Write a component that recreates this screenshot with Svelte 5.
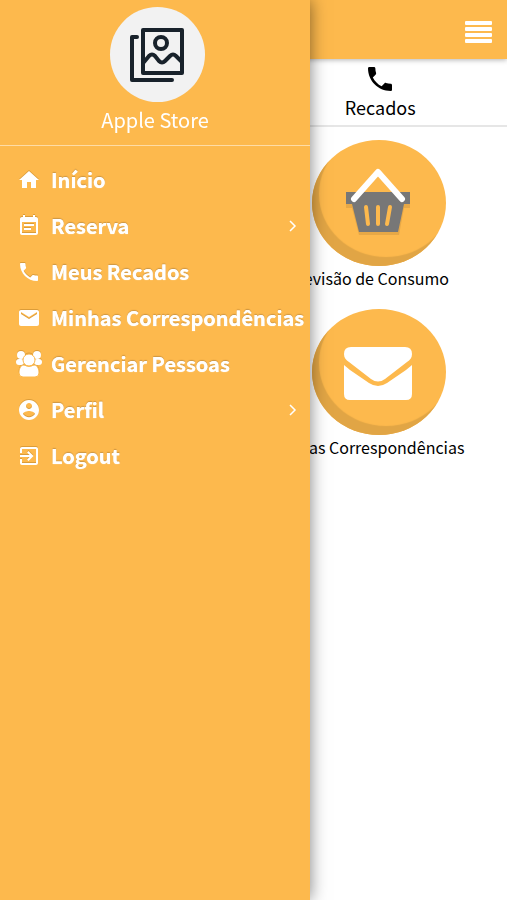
<script lang="ts">
  let open = true;

  const menu = [
    { label: "Início", icon: "home", sub: false },
    { label: "Reserva", icon: "event", sub: true },
    { label: "Meus Recados", icon: "phone", sub: false },
    { label: "Minhas Correspondências", icon: "mail", sub: false },
    { label: "Gerenciar Pessoas", icon: "group", sub: false },
    { label: "Perfil", icon: "account", sub: true },
    { label: "Logout", icon: "exit", sub: false },
  ];

  const paths: Record<string, string> = {
    home: "M10 20v-6h4v6h5v-8h3L12 3 2 12h3v8z",
    event: "M17 10H7v2h10v-2zm2-7h-1V1h-2v2H8V1H6v2H5c-1.110 0-2 .9-2 2v14c0 1.100.89 2 2 2h14c1.100 0 2-.9 2-2V5c0-1.100-.9-2-2-2zm0 16H5V8h14v11zm-5-5H7v2h7v-2z",
    phone: "M6.620 10.790c1.440 2.830 3.760 5.140 6.590 6.590l2.200-2.200c.27-.27.67-.36 1.020-.24 1.120.37 2.330.57 3.570.57.55 0 1 .45 1 1V20c0 .55-.45 1-1 1-9.390 0-17-7.610-17-17 0-.55.45-1 1-1h3.500c.55 0 1 .45 1 1 0 1.250.2 2.450.57 3.570.11.35.03.74-.25 1.020l-2.200 2.200z",
    mail: "M20 4H4c-1.100 0-2 .9-2 2v12c0 1.100.9 2 2 2h16c1.100 0 2-.9 2-2V6c0-1.100-.9-2-2-2zm0 4l-8 5-8-5V6l8 5 8-5v2z",
    account: "M12 2C6.480 2 2 6.480 2 12s4.480 10 10 10 10-4.480 10-10S17.520 2 12 2zm0 3c1.660 0 3 1.340 3 3s-1.340 3-3 3-3-1.340-3-3 1.340-3 3-3zm0 14.200c-2.500 0-4.710-1.280-6-3.220.03-1.990 4-3.080 6-3.080 1.990 0 5.970 1.090 6 3.080-1.290 1.940-3.500 3.220-6 3.220z",
    exit: "M10.090 15.590L11.500 17l5-5-5-5-1.410 1.410L12.670 11H3v2h9.670l-2.580 2.590zM19 3H5c-1.110 0-2 .9-2 2v4h2V5h14v14H5v-4H3v4c0 1.100.89 2 2 2h14c1.100 0 2-.9 2-2V5c0-1.100-.9-2-2-2z",
  };
</script>

<div class="page">
  <header>
    <button class="toggle" aria-label="Menu" on:click={() => (open = !open)}>
      <svg width="28" height="22" viewBox="0 0 28 22" fill="#fff">
        <rect x="0" y="0" width="27" height="4" rx="1" />
        <rect x="0" y="6" width="27" height="4" rx="1" />
        <rect x="0" y="12" width="27" height="4" rx="1" />
        <rect x="0" y="18" width="27" height="4" rx="1" />
      </svg>
    </button>
  </header>

  <nav class="tabs">
    <a class="tab" href="#recados">
      <svg width="32" height="32" viewBox="0 0 24 24"><path d={paths.phone} /></svg>
      <span>Recados</span>
    </a>
  </nav>

  <main>
    <a class="tile" href="#consumo">
      <span class="disc">
        <svg width="70" height="70" viewBox="0 0 70 70">
          <path fill="#d99d42" d="M2 28h64v12h-6l-5 27H15L8 40H2z" opacity=".6" />
          <path fill="#777" d="M2 24h64v12h-6l-6 28H15L8 36H2z" />
          <path stroke="#fdb94d" stroke-width="4" stroke-linecap="round" fill="none" d="M22 39l2 17M34 39v17M46 39l-3 17" />
          <path stroke="#fff" stroke-width="6" stroke-linecap="round" stroke-linejoin="round" fill="none" d="M10 31L34 4l24 27" />
        </svg>
      </span>
      <span class="caption">Previsão de Consumo</span>
    </a>
    <a class="tile" href="#correspondencias">
      <span class="disc">
        <svg width="70" height="70" viewBox="0 0 70 70" fill="#fff">
          <path d="M7 10h54q7 0 7 7c0 4-2 6-5 8L41 42q-7 5-14 0L5 25c-3-2-5-4-5-8q0-7 7-7z" />
          <path d="M0 28c2 2 4 3 6 5l19 13q9 6 18 0l19-13c2-2 4-3 6-5v29q0 6-6 6H6q-6 0-6-6z" />
        </svg>
      </span>
      <span class="caption">Minhas Correspondências</span>
    </a>
  </main>
</div>

{#if open}
  <aside>
    <div class="profile">
      <div class="avatar">
        <svg width="54" height="54" viewBox="0 0 54 54" fill="none" stroke="#18222b" stroke-width="4" stroke-linejoin="round" stroke-linecap="round">
          <path d="M13 2h39v43H13zM7 9H2v43h40" />
          <circle cx="31" cy="15" r="6" />
          <path d="M14 34l5-6q3-3 6 0l4 5q3 3 6 0l5-5q3-3 6 0l6 6" />
        </svg>
      </div>
      <div class="name">Apple Store</div>
    </div>

    <ul>
      {#each menu as item}
        <li>
          <a href="#{item.icon}">
            <span class="icon">
              {#if item.icon == "group"}
                <svg width="28" height="28" viewBox="0 0 28 28" fill="#fff">
                  <circle cx="6" cy="5" r="4" />
                  <circle cx="22" cy="5" r="4" />
                  <rect x="1" y="9" width="8" height="6" rx="3" />
                  <rect x="19" y="9" width="8" height="6" rx="3" />
                  <circle cx="14" cy="10" r="6" stroke="#fdb94d" />
                  <path d="M9 15q5 3 10 0c4 0 5 5 5 8q0 4-4 4H8q-4 0-4-4c0-3 1-8 5-8z" stroke="#fdb94d" />
                </svg>
              {:else}
                <svg width="24" height="24" viewBox="0 0 24 24" fill="#fff"><path d={paths[item.icon]} /></svg>
              {/if}
            </span>
            <span class="label">{item.label}</span>
            {#if item.sub}
              <svg class="chevron" width="8" height="12" viewBox="0 0 8 12" fill="none" stroke="#fff" stroke-width="1.500"><path d="M1 1l5 5-5 5" /></svg>
            {/if}
          </a>
        </li>
      {/each}
    </ul>
  </aside>
{/if}

<style>
  :global(body) {
    margin: 0;
    background: #fff;
    font-family: "Noto Sans CJK SC", "Open Sans", sans-serif;
  }

  a {
    color: inherit;
    text-decoration: none;
  }

  svg {
    display: block;
  }

  .page {
    overflow: hidden;
  }

  header {
    display: flex;
    justify-content: flex-end;
    align-items: center;
    height: 59px;
    padding: 4px 14px 0 0;
    box-sizing: border-box;
    background: #fdb94d;
    box-shadow: 0 1px 5px rgba(0, 0, 0, 0.3);
  }

  .toggle {
    padding: 0;
    border: 0;
    background: none;
    cursor: pointer;
  }

  .tabs {
    display: grid;
    grid-template-columns: 1fr 1fr;
    border-bottom: 2px solid #e6e6e6;
  }

  .tab {
    grid-column: 2;
    display: flex;
    flex-direction: column;
    align-items: center;
    padding: 4px 0 6px;
    color: #000;
    font-size: 18px;
    line-height: 24px;
  }

  main {
    display: grid;
    grid-template-columns: 1fr 1fr;
    row-gap: 19px;
    padding-top: 13px;
  }

  .tile {
    grid-column: 2;
    display: flex;
    flex-direction: column;
    align-items: center;
    padding-right: 24px;
    color: #000;
  }

  .disc {
    display: flex;
    justify-content: center;
    align-items: center;
    width: 134px;
    height: 126px;
    margin-left: 22px;
    border-radius: 50%;
    background: #fdb94d;
    box-shadow: inset 7px -9px 1px #e1a545;
  }

  .caption {
    font-size: 16px;
    line-height: 24px;
    white-space: nowrap;
  }

  aside {
    position: fixed;
    top: 0;
    bottom: 0;
    left: 0;
    width: 310px;
    background: #fdb94d;
    box-shadow: 0 0 16px rgba(0, 0, 0, 0.5);
    color: #fff;
  }

  .profile {
    display: flex;
    flex-direction: column;
    align-items: center;
    padding: 7px 0 11px;
    border-bottom: 1px solid #fedca6;
  }

  .avatar {
    display: flex;
    justify-content: center;
    align-items: center;
    width: 95px;
    height: 95px;
    margin-left: 4px;
    border-radius: 50%;
    background: #f2f2f2;
  }

  .name {
    margin-top: 4px;
    font-size: 20px;
    line-height: 28px;
  }

  ul {
    margin: 0;
    padding: 11px 0 0;
    list-style: none;
  }

  li a {
    display: flex;
    align-items: center;
    padding: 0 5px 0 15px;
    font-size: 20px;
    font-weight: 700;
    line-height: 46px;
    text-shadow: 0 0 1px #fff, 0 -1px 1px rgba(120, 70, 0, 0.4);
  }

  .icon {
    display: flex;
    flex-shrink: 0;
    justify-content: center;
    width: 28px;
    margin-right: 8px;
    filter: drop-shadow(0 -1px 0 rgba(120, 70, 0, 0.25));
  }

  .label {
    flex: 1;
    white-space: nowrap;
  }

  .chevron {
    margin-right: 8px;
  }
</style>
